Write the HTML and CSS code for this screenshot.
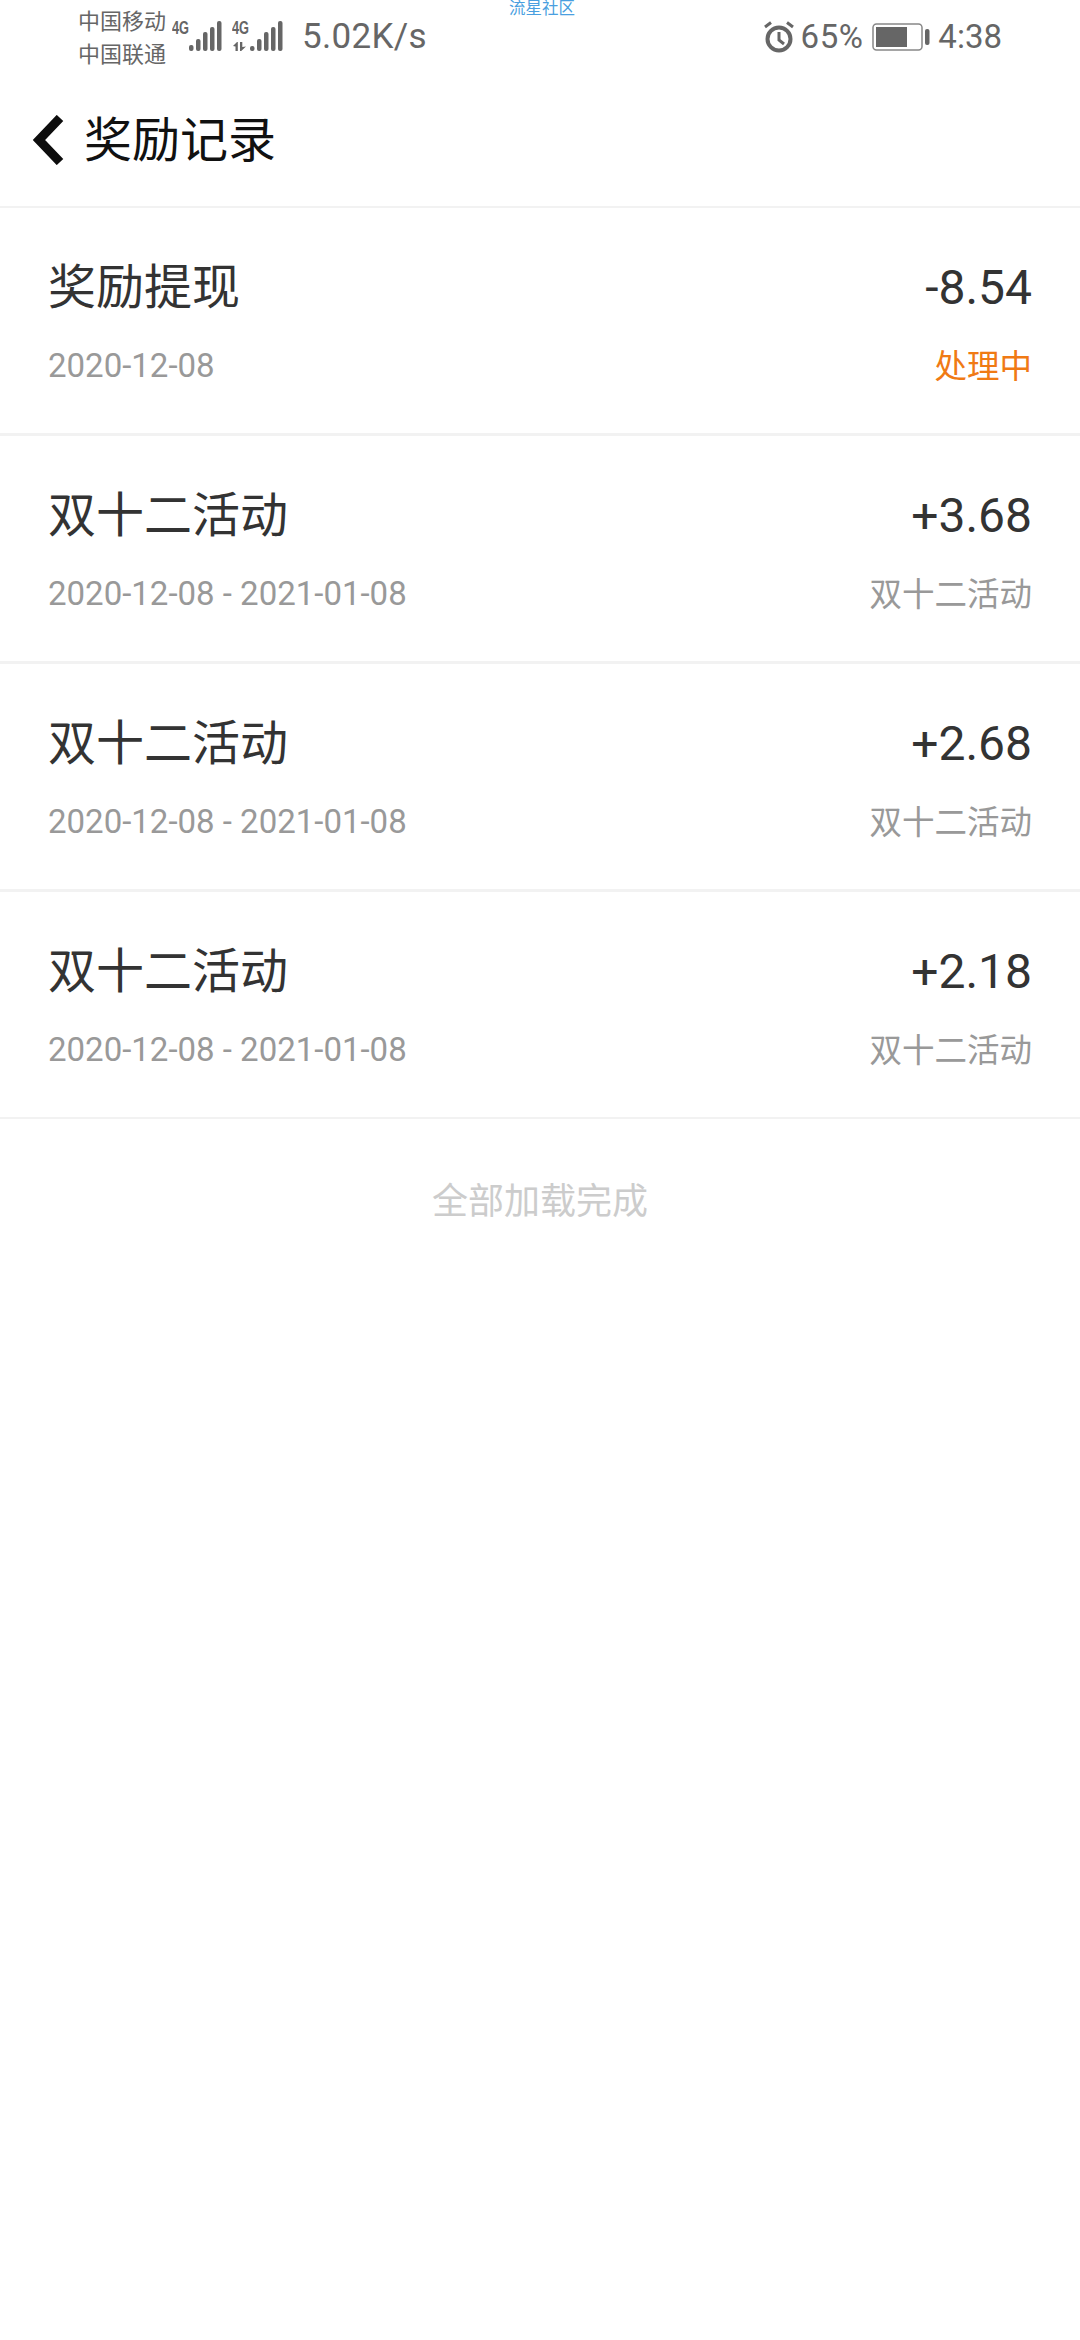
FILE: index.html
```html
<!DOCTYPE html>
<html lang="zh-CN">
<head>
<meta charset="utf-8">
<title>奖励记录</title>
<link rel="stylesheet" href="styles.css">
</head>
<body>
<div class="page">
  <div class="status">
    <div class="status-left">
      <div class="carriers"><span>中国移动</span><span>中国联通</span></div>
      <svg class="signal" width="52" height="40" viewBox="0 0 52 40">
        <text class="net" x="0" y="19" textLength="17" lengthAdjust="spacingAndGlyphs">4G</text>
        <g fill="#666">
          <rect x="17" y="30" width="4.500" height="6" rx="2"/>
          <rect x="24" y="24" width="4.500" height="12" rx="2"/>
          <rect x="31" y="17" width="4.500" height="19" rx="2"/>
          <rect x="38" y="12" width="4.500" height="24" rx="2"/>
          <rect x="45" y="6" width="4.500" height="30" rx="2"/>
        </g>
      </svg>
      <svg class="signal second" width="52" height="40" viewBox="0 0 52 40">
        <text class="net" x="0" y="19" textLength="17" lengthAdjust="spacingAndGlyphs">4G</text>
        <g fill="#666">
          <path d="M1 31 5 27 5.800 27V36H3.500V31.500ZM8 27h2.300V32L14 31.500 9.200 36 8 36Z"/>
          <rect x="18" y="31" width="4.500" height="5" rx="2"/>
          <rect x="25" y="24" width="4.500" height="12" rx="2"/>
          <rect x="32" y="17" width="4.500" height="19" rx="2"/>
          <rect x="39" y="12" width="4.500" height="24" rx="2"/>
          <rect x="46" y="6" width="4.500" height="30" rx="2"/>
        </g>
      </svg>
      <span class="speed">5.02K/s</span>
    </div>
    <span class="watermark">流星社区</span>
    <div class="status-right">
      <svg class="alarm" width="32" height="32" viewBox="0 0 32 32">
        <circle cx="16" cy="18" r="11.500" fill="none" stroke="#666" stroke-width="4"/>
        <path d="M16 11v8l5 4" fill="none" stroke="#666" stroke-width="3"/>
        <path d="M2 6 8 1.500M30 6 24 1.500" fill="none" stroke="#666" stroke-width="3"/>
      </svg>
      <span class="pct">65%</span>
      <svg class="battery" width="58" height="28" viewBox="0 0 58 28">
        <rect x="1" y="1" width="49" height="26" rx="3.500" fill="none" stroke="#888" stroke-width="1.500"/>
        <rect x="4" y="4" width="31" height="20" fill="#666"/>
        <rect x="53" y="6" width="4.500" height="16" rx="2" fill="#666"/>
      </svg>
      <span class="clock">4:38</span>
    </div>
  </div>

  <header class="nav">
    <svg class="back" width="34" height="50" viewBox="0 0 34 50">
      <path d="M28 3 7 25 28 47" fill="none" stroke="#0d0d0d" stroke-width="9"/>
    </svg>
    <h1 class="nav-title">奖励记录</h1>
  </header>

  <ul class="records">
    <li class="record">
      <div class="line"><span class="name">奖励提现</span><span class="amount">-8.54</span></div>
      <div class="line meta"><span class="date">2020-12-08</span><span class="state pending">处理中</span></div>
    </li>
    <li class="record">
      <div class="line"><span class="name">双十二活动</span><span class="amount">+3.68</span></div>
      <div class="line meta"><span class="date">2020-12-08 - 2021-01-08</span><span class="state">双十二活动</span></div>
    </li>
    <li class="record">
      <div class="line"><span class="name">双十二活动</span><span class="amount">+2.68</span></div>
      <div class="line meta"><span class="date">2020-12-08 - 2021-01-08</span><span class="state">双十二活动</span></div>
    </li>
    <li class="record">
      <div class="line"><span class="name">双十二活动</span><span class="amount">+2.18</span></div>
      <div class="line meta"><span class="date">2020-12-08 - 2021-01-08</span><span class="state">双十二活动</span></div>
    </li>
  </ul>
  <p class="end">全部加载完成</p>
</div>
</body>
</html>
```
FILE: styles.css
```css
* { box-sizing: border-box; }

html, body { margin: 0; padding: 0; background: #fff; }

body {
  font-family: Roboto, "Noto Sans CJK SC", sans-serif;
}

.page {
  width: 1080px;
  height: 2340px;
  overflow: hidden;
  position: relative;
  background: #fff;
}

/* status bar */
.status {
  height: 72px;
  display: flex;
  justify-content: space-between;
  align-items: flex-start;
  padding: 0 78px;
  color: #666;
}

.status-left {
  display: flex;
  align-items: flex-start;
}

.carriers {
  display: flex;
  flex-direction: column;
  width: 94px;
  padding-top: 5px;
  font-size: 22px;
  line-height: 33px;
}

.signal { margin-top: 15px; }
.signal.second { margin-left: 8px; }

.net {
  font-family: "Liberation Sans", sans-serif;
  font-size: 18px;
  font-weight: 700;
  fill: #666;
}

.speed {
  margin-left: 18px;
  margin-top: 16px;
  font-size: 35px;
  line-height: 42px;
  letter-spacing: 0.3px;
}

.watermark {
  position: absolute;
  left: 509px;
  top: 0;
  font-size: 16.500px;
  line-height: 17px;
  color: #4a9fe0;
}

.status-right {
  display: flex;
  align-items: flex-start;
}

.alarm { margin-top: 21px; }

.pct {
  margin-left: 6px;
  margin-top: 16px;
  font-size: 33px;
  line-height: 42px;
  letter-spacing: 0.5px;
}

.battery { margin-left: 9px; margin-top: 23px; }

.clock {
  margin-left: 8px;
  margin-top: 16px;
  font-size: 33px;
  line-height: 42px;
}

/* title bar */
.nav {
  height: 136px;
  display: flex;
  align-items: center;
  gap: 18px;
  padding: 0 0 7px 32px;
  border-bottom: 2px solid #f2f2f2;
}

.back { flex: none; margin-top: 9px; }

.nav-title {
  margin: 0;
  font-size: 48px;
  font-weight: 400;
  color: #111;
}

/* reward records */
.records {
  list-style: none;
  margin: 0;
  padding: 0;
}

.record {
  height: 228px;
  padding: 40px 48px 0;
  border-bottom: 3px solid #f2f2f2;
}

.record:last-child { height: 227px; border-bottom-width: 2px; }

.line {
  display: flex;
  justify-content: space-between;
  align-items: center;
  height: 70px;
}

.meta { height: 42px; margin-top: 26px; }

.name, .amount {
  font-size: 48px;
  color: #333;
}

.amount { padding-top: 8px; }

.date, .state {
  font-size: 33px;
  color: #999;
}

.state { padding-bottom: 3px; font-size: 32.500px; }

.state.pending { color: #f07a14; }

.end {
  margin: 58px 0 0;
  text-align: center;
  font-size: 36px;
  line-height: 50px;
  color: #ccc;
}
```
